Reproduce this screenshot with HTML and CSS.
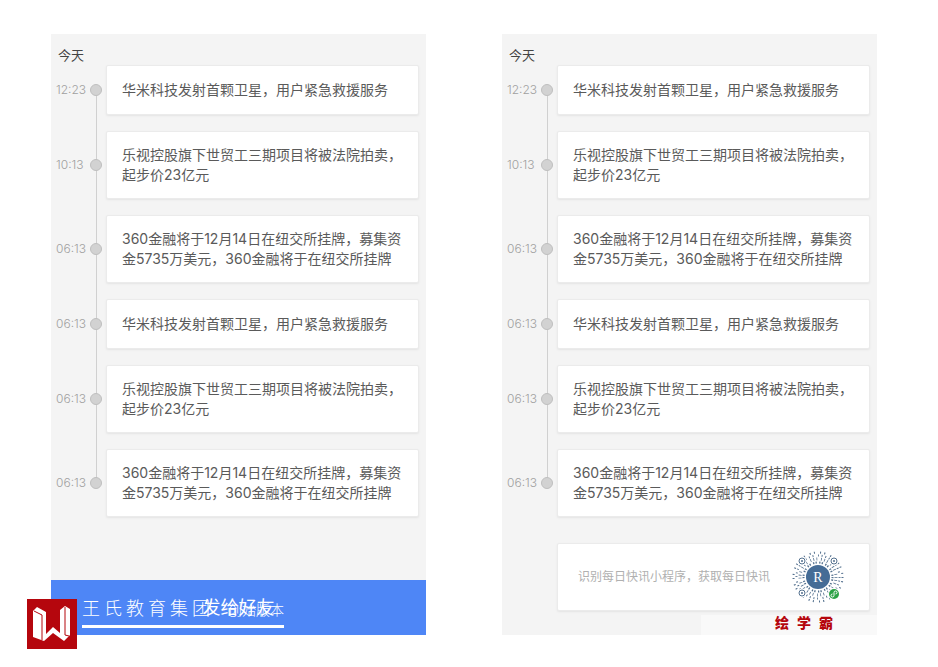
FILE: index.html
```html
<!DOCTYPE html>
<html lang="zh-CN">
<head>
<meta charset="utf-8">
<meta name="viewport" content="width=device-width, initial-scale=1">
<title>每日快讯</title>
<link rel="stylesheet" href="styles.css">
</head>
<body>
<main class="board">
  <section class="screen">
    <h2 class="day">今天</h2>
    <ol class="timeline">
      <li class="entry"><time class="time">12:23</time><span class="dot"></span><p class="card">华米科技发射首颗卫星，用户紧急救援服务</p></li>
      <li class="entry"><time class="time">10:13</time><span class="dot"></span><p class="card">乐视控股旗下世贸工三期项目将被法院拍卖，<br>起步价23亿元</p></li>
      <li class="entry"><time class="time">06:13</time><span class="dot"></span><p class="card">360金融将于12月14日在纽交所挂牌，募集资<br>金5735万美元，360金融将于在纽交所挂牌</p></li>
      <li class="entry"><time class="time">06:13</time><span class="dot"></span><p class="card">华米科技发射首颗卫星，用户紧急救援服务</p></li>
      <li class="entry"><time class="time">06:13</time><span class="dot"></span><p class="card">乐视控股旗下世贸工三期项目将被法院拍卖，<br>起步价23亿元</p></li>
      <li class="entry"><time class="time">06:13</time><span class="dot"></span><p class="card">360金融将于12月14日在纽交所挂牌，募集资<br>金5735万美元，360金融将于在纽交所挂牌</p></li>
    </ol>
    <button class="send" type="button">发给好友</button>
    <div class="watermark">
      <svg class="wm-logo" viewBox="0 0 50 50" aria-hidden="true">
        <rect width="50" height="50" fill="#b5060d"/>
        <path fill="#fff" d="M6 12 10 8 19 13V35L26 28 33 34V11L38 7 43 10V36L37 42 26 34 17 42 6 38Z"/>
        <path fill="none" stroke="#b5060d" d="M7 12 15 16V41M38 8V36L42 37"/>
      </svg>
      <div class="wm-text"><span class="wm-name">王氏教育集团</span><span class="wm-edition">创始版本</span></div>
    </div>
  </section>

  <section class="screen">
    <h2 class="day">今天</h2>
    <ol class="timeline">
      <li class="entry"><time class="time">12:23</time><span class="dot"></span><p class="card">华米科技发射首颗卫星，用户紧急救援服务</p></li>
      <li class="entry"><time class="time">10:13</time><span class="dot"></span><p class="card">乐视控股旗下世贸工三期项目将被法院拍卖，<br>起步价23亿元</p></li>
      <li class="entry"><time class="time">06:13</time><span class="dot"></span><p class="card">360金融将于12月14日在纽交所挂牌，募集资<br>金5735万美元，360金融将于在纽交所挂牌</p></li>
      <li class="entry"><time class="time">06:13</time><span class="dot"></span><p class="card">华米科技发射首颗卫星，用户紧急救援服务</p></li>
      <li class="entry"><time class="time">06:13</time><span class="dot"></span><p class="card">乐视控股旗下世贸工三期项目将被法院拍卖，<br>起步价23亿元</p></li>
      <li class="entry"><time class="time">06:13</time><span class="dot"></span><p class="card">360金融将于12月14日在纽交所挂牌，募集资<br>金5735万美元，360金融将于在纽交所挂牌</p></li>
    </ol>
    <div class="share">
      <span class="share-text">识别每日快讯小程序，获取每日快讯</span>
      <svg class="code" viewBox="0 0 52 52" aria-hidden="true">
        <g fill="none" stroke="#54718f">
          <circle cx="26" cy="26" r="14.5" stroke-width="2" pathLength="144" stroke-dasharray="2 2 2 4"/>
          <circle cx="26" cy="26" r="18" stroke-width="3" pathLength="144" stroke-dasharray="1 3 1 3 1 5"/>
          <circle cx="26" cy="26" r="21.5" stroke-width="2" pathLength="144" stroke-dasharray="1 3 1 3 1 3 1 5"/>
          <circle cx="26" cy="26" r="24.5" stroke-width="2" pathLength="144" stroke-dasharray="1 3 1 5"/>
        </g>
        <g fill="#fff" stroke="#fff" stroke-width="3"><circle cx="10" cy="10" r="3"/><circle cx="42" cy="10" r="3"/><circle cx="10" cy="42" r="3"/></g>
        <g fill="#fff" stroke="#54718f"><circle cx="10" cy="10" r="3"/><circle cx="42" cy="10" r="3"/><circle cx="10" cy="42" r="3"/></g>
        <g fill="#54718f"><circle cx="10" cy="10" r="1"/><circle cx="42" cy="10" r="1"/><circle cx="10" cy="42" r="1"/></g>
        <circle cx="26" cy="26" r="12" fill="#456c96"/>
        <text class="code-letter" x="26" y="31" text-anchor="middle">R</text>
        <circle cx="42" cy="43" r="6" fill="#fff"/>
        <circle cx="42" cy="43" r="5" fill="#2ba245"/>
        <path fill="none" stroke="#fff" d="M40.5 43a1.5 1.5 0 1 0 1.5 1.5V41.5a1.5 1.5 0 1 1 1.5 1.5"/>
      </svg>
    </div>
    <div class="brand">绘学霸</div>
  </section>
</main>
</body>
</html>
```
FILE: styles.css
```css
* { box-sizing: border-box; }

body {
  margin: 0;
  background: #fff;
  color: #5a5a5a;
  font: 14px/20px Inter, "Noto Sans CJK SC", sans-serif;
}

.board {
  display: grid;
  grid-template-columns: 1fr 1fr;
  gap: 76px;
  padding: 34px 61px 32px 51px;
}

.screen {
  position: relative;
  display: flex;
  flex-direction: column;
  background: #f4f4f4;
}

.day {
  margin: 0;
  padding: 12px 7px 0;
  font-size: 13px;
  font-weight: 400;
  line-height: 19px;
  color: #444;
}

.timeline {
  display: flex;
  flex-direction: column;
  gap: 16px;
  margin: 0;
  padding: 0 7px 0 5px;
  list-style: none;
}

.entry {
  position: relative;
  display: grid;
  grid-template-columns: 34px 12px 1fr;
  align-items: center;
}

.entry::before {
  content: "";
  position: absolute;
  left: 40px;
  top: 0;
  bottom: -16px;
  width: 1px;
  background: #d0d0d0;
}

.entry:first-child::before { top: 50%; }
.entry:last-child::before { bottom: 50%; }

.time {
  font-size: 12px;
  font-weight: 300;
  color: #a0a0a0;
}

.dot {
  position: relative;
  width: 12px;
  height: 12px;
  border: 1px solid #bfbfbf;
  border-radius: 50%;
  background: #d2d2d2;
}

.card,
.share {
  border: 1px solid #ebebeb;
  border-radius: 2px;
  background: #fff;
  box-shadow: 0 1px 2px #e4e4e4;
}

.card {
  display: grid;
  align-content: center;
  min-height: 50px;
  margin: 0 0 0 4px;
  padding: 13px 15px;
  white-space: nowrap;
}

.send {
  height: 55px;
  margin-top: 63px;
  padding: 0;
  border: 0;
  background: #4e86f6;
  color: #fff;
  font: 18px/24px Inter, "Noto Sans CJK SC", sans-serif;
}

.watermark {
  position: absolute;
  left: -24px;
  bottom: -14px;
  display: flex;
  gap: 5px;
  color: #fff;
  pointer-events: none;
}

.wm-logo {
  width: 50px;
  height: 50px;
}

.wm-text {
  display: flex;
  align-items: baseline;
  gap: 14px;
  height: 29px;
  border-bottom: 3px solid #fff;
  font-weight: 300;
  white-space: nowrap;
}

.wm-name {
  font-size: 18px;
  letter-spacing: 4px;
}

.wm-edition {
  font-size: 14px;
}

.share {
  display: flex;
  align-items: center;
  justify-content: space-between;
  height: 68px;
  margin: 26px 7px 0 55px;
  padding: 0 25px 0 20px;
}

.share-text {
  font-size: 12px;
  color: #b0b0b0;
}

.code {
  width: 52px;
  height: 52px;
}

.code-letter {
  fill: #fff;
  font: 14px "Liberation Serif", serif;
}

.brand {
  align-self: flex-end;
  width: 176px;
  margin-top: 4px;
  padding: 0 0 4px 74px;
  background: #f9f9f9;
  color: #b5060d;
  font-size: 14px;
  font-weight: 900;
  line-height: 16px;
  letter-spacing: 8px;
}
```
